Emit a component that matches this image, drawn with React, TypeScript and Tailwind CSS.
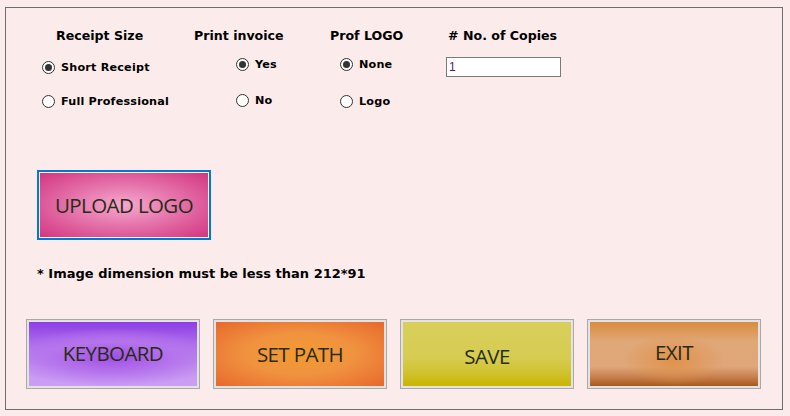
import React, { useState } from "react";

const labelFont = { fontFamily: '"DejaVu Sans", Verdana, sans-serif' };
const buttonFont = { fontFamily: '"Open Sans", "Noto Sans", sans-serif' };

interface RadioProps {
  label: string;
  checked: boolean;
  onSelect: () => void;
}

const Radio = ({ label, checked, onSelect }: RadioProps) => (
  <button
    type="button"
    onClick={onSelect}
    className="flex items-center gap-[6px] text-[11.2px] font-bold text-black leading-none"
  >
    <span className="w-[13px] h-[13px] rounded-full border border-[#333] bg-white flex items-center justify-center">
      {checked && <span className="w-[7px] h-[7px] rounded-full bg-[#333]" />}
    </span>
    <span className="tracking-[0.2px]">{label}</span>
  </button>
);

interface BigButtonProps {
  label: string;
  bg: string;
  textPos?: string;
}

const BigButton = ({ label, bg, textPos = "" }: BigButtonProps) => (
  <button
    type="button"
    className="w-[174px] h-[70px] border border-[#a9a9a9] bg-[#e3e3e3] p-[2px]"
  >
    <span
      className={`w-full h-full flex items-center justify-center text-[20.5px] font-medium tracking-[-0.6px] text-[#272c12] ${bg}`}
      style={buttonFont}
    >
      <span className={textPos}>{label}</span>
    </span>
  </button>
);

const App = () => {
  const [size, setSize] = useState("short");
  const [invoice, setInvoice] = useState("yes");
  const [logo, setLogo] = useState("none");
  const [copies, setCopies] = useState("1");

  return (
    <div className="w-[790px] h-[416px] bg-[#fbeceb] pt-[7px] pl-[5px]" style={labelFont}>
      <div className="w-[778px] h-[403px] border border-[#6e6e6e]">
        <div className="flex pt-[19px] text-[12.6px] font-bold">
          <div className="w-[188px] pl-[36px]">
            <div className="pl-[14px] h-[18px]">Receipt Size</div>
            <div className="mt-[16px] flex flex-col gap-[21px]">
              <Radio label="Short Receipt" checked={size === "short"} onSelect={() => setSize("short")} />
              <Radio label="Full Professional" checked={size === "full"} onSelect={() => setSize("full")} />
            </div>
          </div>
          <div className="w-[136px]">
            <div className="h-[18px]">Print invoice</div>
            <div className="mt-[13px] pl-[42px] flex flex-col gap-[23px]">
              <Radio label="Yes" checked={invoice === "yes"} onSelect={() => setInvoice("yes")} />
              <Radio label="No" checked={invoice === "no"} onSelect={() => setInvoice("no")} />
            </div>
          </div>
          <div className="w-[118px]">
            <div className="h-[18px]">Prof LOGO</div>
            <div className="mt-[13px] pl-[10px] flex flex-col gap-[24px]">
              <Radio label="None" checked={logo === "none"} onSelect={() => setLogo("none")} />
              <Radio label="Logo" checked={logo === "logo"} onSelect={() => setLogo("logo")} />
            </div>
          </div>
          <div>
            <div className="h-[18px]"># No. of Copies</div>
            <input
              value={copies}
              onChange={(e) => setCopies(e.target.value)}
              className="mt-[12px] -ml-[2px] w-[115px] h-[20px] border border-[#7a7a7a] bg-white px-[2px] text-[12px] font-normal text-[#5a1a6a] outline-none"
              style={{ fontFamily: '"Liberation Sans", Arial, sans-serif' }}
            />
          </div>
        </div>

        <div className="ml-[31px] mt-[62px] w-[174px] h-[70px] border-2 border-[#0078d7] p-[1px] bg-[#f4f4f4]">
          <button
            type="button"
            className="w-full h-full flex items-center justify-center text-[20.5px] font-medium tracking-[-0.6px] text-[#272c12] bg-[radial-gradient(ellipse_at_center,#f7a8cf_0%,#e574ac_45%,#d3357f_100%)]"
            style={buttonFont}
          >
            UPLOAD LOGO
          </button>
        </div>

        <p className="ml-[31px] mt-[24px] text-[13px] font-bold">
          * Image dimension must be less than 212*91
        </p>

        <div className="ml-[20px] mt-[35px] flex gap-[13px]">
          <BigButton
            label="KEYBOARD"
            bg="bg-[radial-gradient(ellipse_90%_60%_at_50%_55%,#a24fe6_0%,#b574ec_40%,transparent_75%),linear-gradient(180deg,#8e3ee6_0%,#a866ea_30%,#c89af2_70%,#cb9ef4_100%)]"
          />
          <BigButton
            label="SET PATH"
            textPos="mt-[1px]"
            bg="bg-[radial-gradient(ellipse_at_center,#f3992f_0%,#f09340_45%,#e8682c_100%)]"
          />
          <BigButton
            label="SAVE"
            textPos="mt-[5px]"
            bg="bg-[linear-gradient(180deg,#d8cf5c_0%,#d6cc52_55%,#d0c22e_80%,#c9b400_100%)]"
          />
          <BigButton
            label="EXIT"
            textPos="-mt-[2px]"
            bg="bg-[radial-gradient(ellipse_30%_40%_at_50%_60%,#e0924a_0%,rgba(226,168,120,0)_100%),linear-gradient(180deg,#d88c3e_0%,#e0a777_30%,#dfa67a_70%,#c98250_85%,#a85a1c_100%)]"
          />
        </div>
      </div>
    </div>
  );
};

export default App;
